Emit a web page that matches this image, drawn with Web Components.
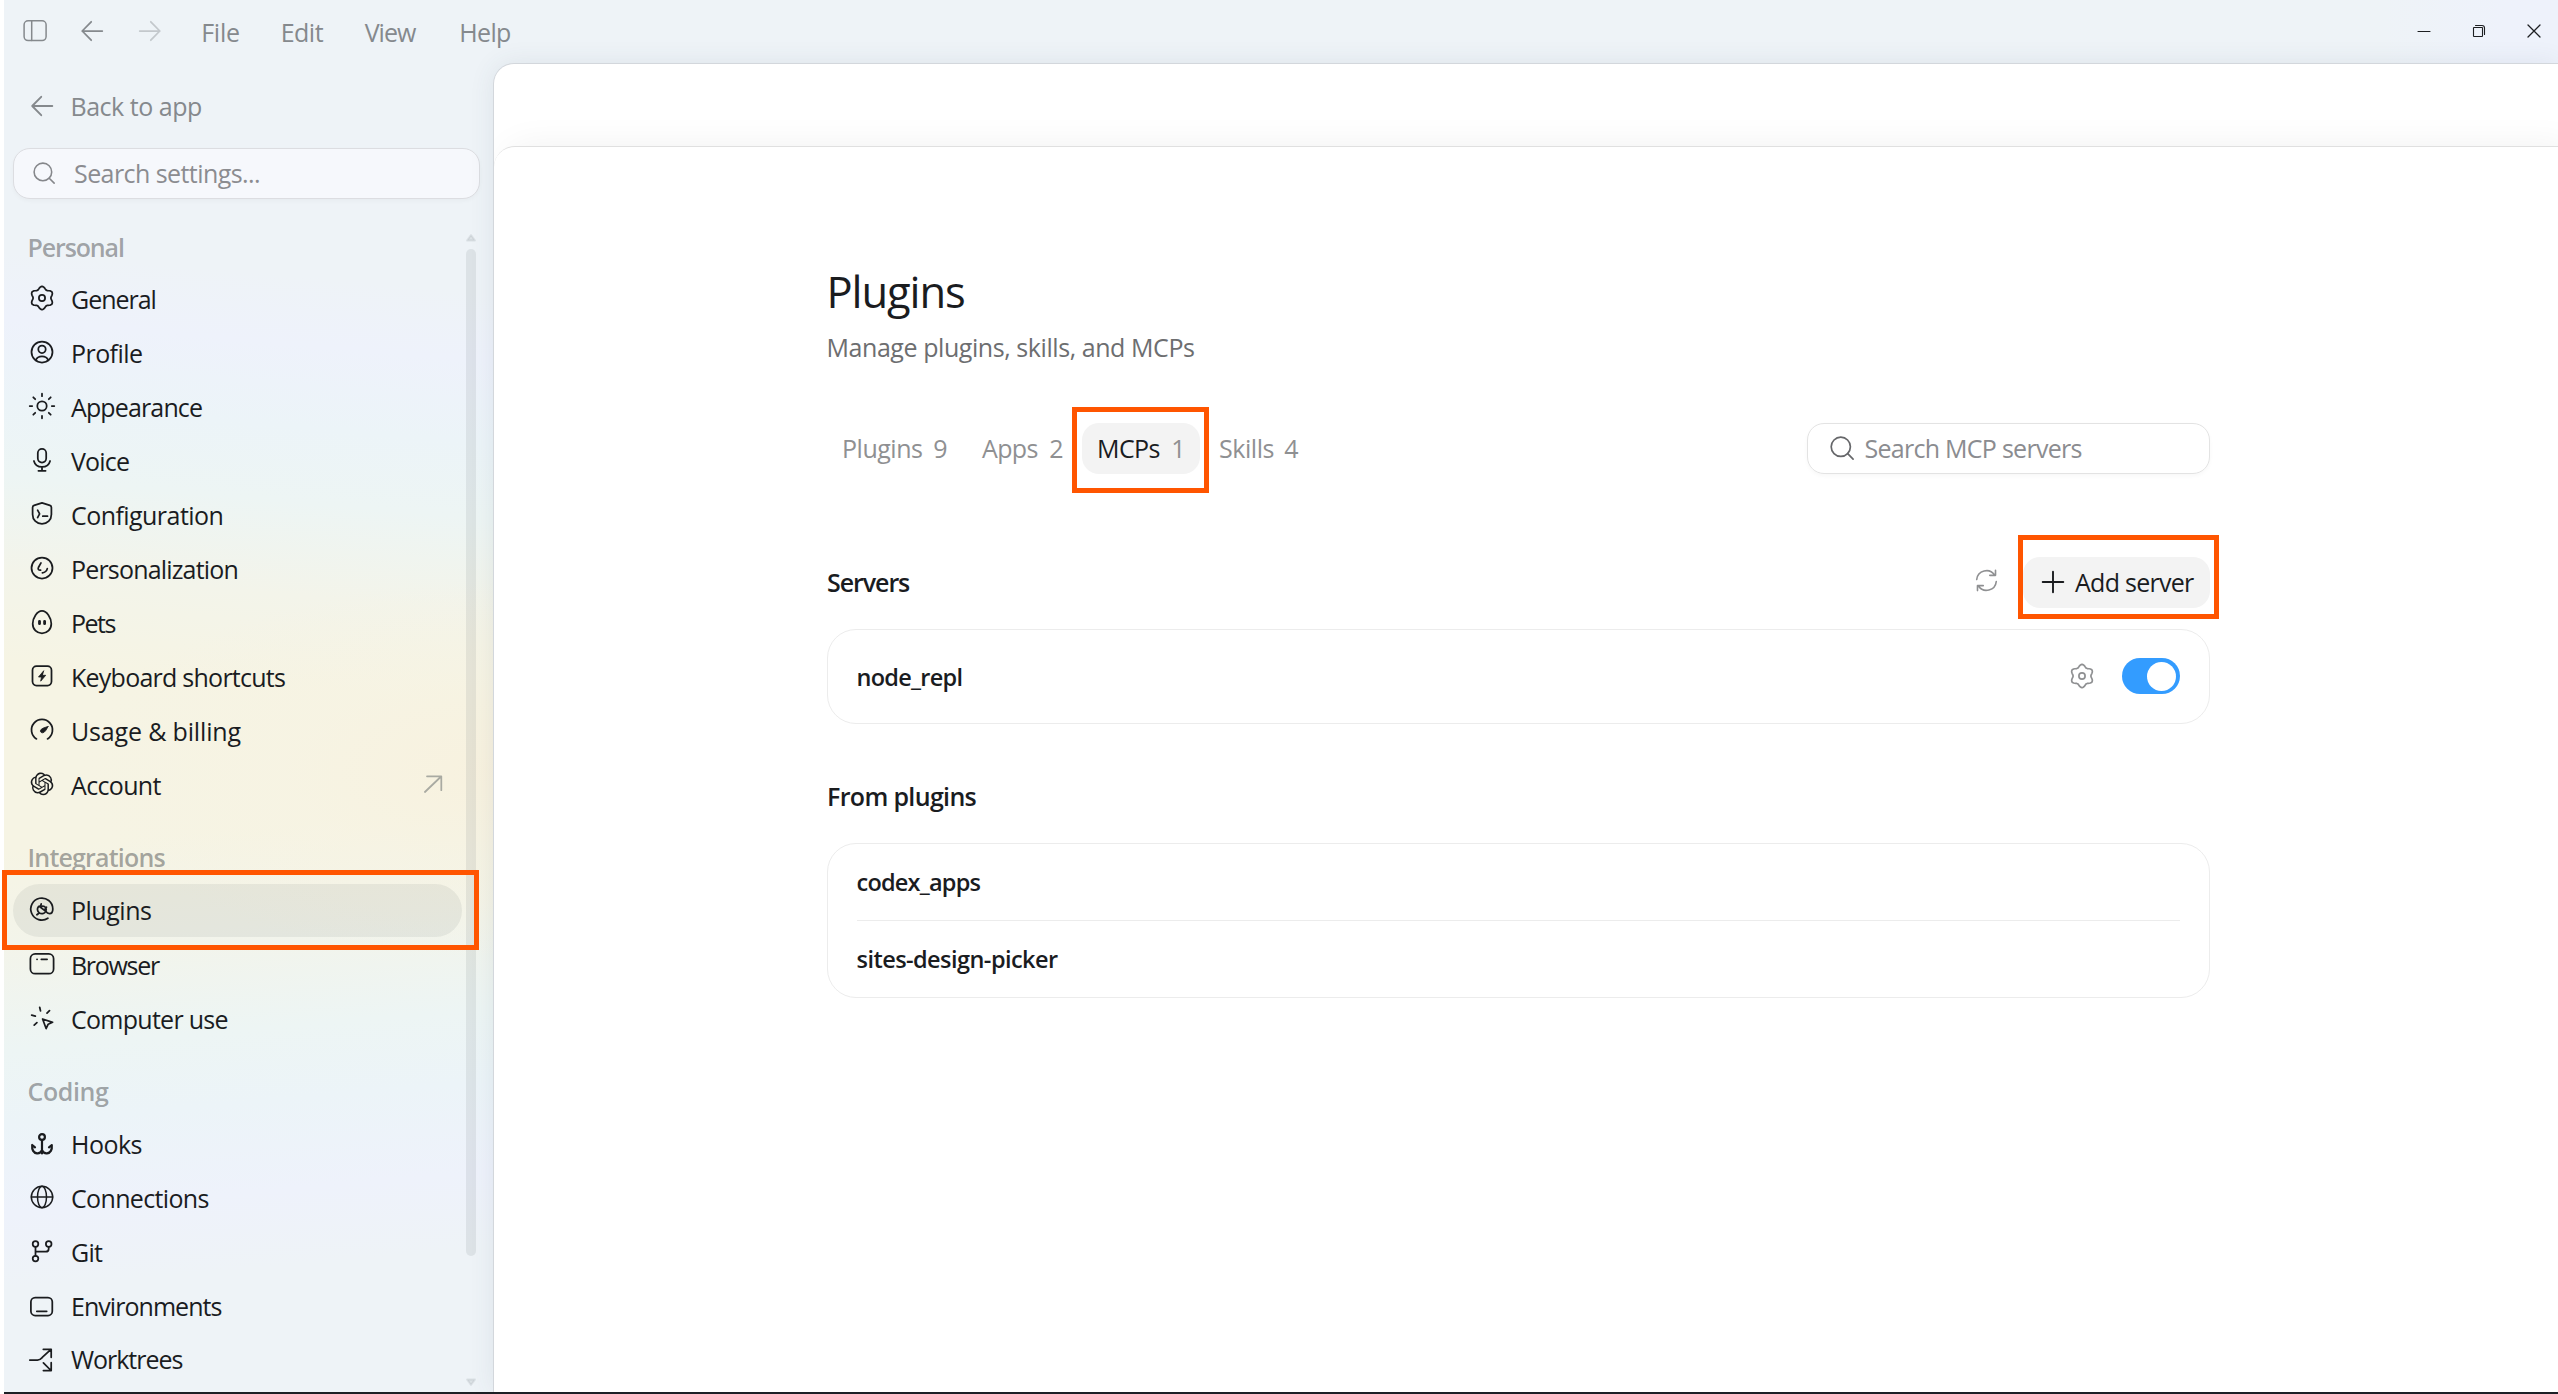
<!DOCTYPE html>
<html lang="en">
<head>
<meta charset="utf-8">
<title>Settings – Plugins</title>
<style>
html,body{margin:0;height:100%;overflow:hidden;background:#fff}
body{font:400 25px/34px "Open Sans","Noto Sans",sans-serif;color:#1a1c1f}
</style>
</head>
<body>
<settings-app></settings-app>
<script>
// Six-lobed outline of the gear icon
const gear=(()=>{let d='';for(let i=0;i<72;i++){const a=i*Math.PI/36,r=10.25+1.35*Math.cos(6*(a-Math.PI/2));d+=(i?'L':'M')+(12+r*Math.cos(a)).toFixed(2)+' '+(12-r*Math.sin(a)).toFixed(2)}return `<path d="${d}Z"/><circle cx="12" cy="12" r="3.1"/>`})();
const ICONS={
gear,
profile:'<circle cx="12" cy="12" r="10.5"/><circle cx="12" cy="9.3" r="3.7"/><path d="M5.7 20.3c1-2.7 3.4-4 6.3-4s5.3 1.3 6.3 4"/>',
sun:'<circle cx="12" cy="12" r="4.7"/><path d="M12-.3v2.5M12 21.8v2.5M-.3 12h2.5M21.8 12h2.5M3.3 3.3l1.9 1.9M18.8 18.8l1.9 1.9M3.3 20.7l1.9-1.9M18.8 5.2l1.9-1.9"/>',
mic:'<rect x="7.8" y=".9" width="8.4" height="13.6" rx="4.2"/><path d="M3.9 13c.9 3.600 4.200 5.900 8.100 5.900s7.200-2.300 8.100-5.900M12 18.900v3.900M8.400 22.800h7.200"/>',
shield:'<path d="M12 .9l7.900 2.500q1.500.5 1.500 2.100v7c0 5.300-4 9.400-9.400 9.400s-9.400-4.100-9.400-9.400v-7q0-1.600 1.500-2.100z"/><path d="M7.600 8.200l2 3.700-2 3.700M12.800 14.200h4.700"/>',
person:'<circle cx="12" cy="12" r="10.500"/><path d="M11 6.900l-2.600 4.600q-.6 1.300.2 2.100 .8.700 2 .5M17.300 12.600c-.6 2.300-2.300 3.900-4.900 4.300"/>',
egg:'<path d="M12 .9c5 0 9.300 7.100 9.300 12.800 0 5.700-4.200 9.600-9.300 9.600s-9.300-3.900-9.300-9.600c0-5.700 4.300-12.800 9.300-12.800z"/><path d="M9.500 11.300v2.400M14.600 11.300v2.400" stroke-width="2.800"/>',
bolt:'<rect x="2.500" y="2.200" width="19" height="19.300" rx="4"/><path d="M13.500 7l-5 6h3l-.8 4.200 5-5.900h-3z" fill="currentColor" stroke-width=".8"/>',
gauge:'<path d="M6.500 20.900a10.500 10.500 0 1 1 11 0"/><path d="M18 8.600c-1.500 3-3.200 6-5.200 6.200-1.300.1-2.400-.6-2.400-1.800 0-2.200 4.500-3.700 7.600-4.400z" fill="currentColor" stroke-width=".8"/>',
openai:'<path transform="translate(.65 .5) scale(.946)" fill="currentColor" stroke="none" d="M22.2819 9.8211a5.9847 5.9847 0 0 0-.5157-4.9108 6.0462 6.0462 0 0 0-6.5098-2.9A6.0651 6.0651 0 0 0 4.9807 4.1818a5.9847 5.9847 0 0 0-3.9977 2.9 6.0462 6.0462 0 0 0 .7427 7.0966 5.98 5.98 0 0 0 .511 4.9107 6.051 6.051 0 0 0 6.5146 2.9001A5.9847 5.9847 0 0 0 13.2599 24a6.0557 6.0557 0 0 0 5.7718-4.2058 5.9894 5.9894 0 0 0 3.9977-2.9001 6.0557 6.0557 0 0 0-.7475-7.0729zm-9.022 12.6081a4.4755 4.4755 0 0 1-2.8764-1.0408l.1419-.0804 4.7783-2.7582a.7948.7948 0 0 0 .3927-.6813v-6.7369l2.02 1.1686a.071.071 0 0 1 .038.052v5.5826a4.504 4.504 0 0 1-4.4945 4.4944zm-9.6607-4.1254a4.4708 4.4708 0 0 1-.5346-3.0137l.142.0852 4.783 2.7582a.7712.7712 0 0 0 .7806 0l5.8428-3.3685v2.3324a.0804.0804 0 0 1-.0332.0615L9.74 19.9502a4.4992 4.4992 0 0 1-6.1408-1.6464zM2.3408 7.8956a4.485 4.485 0 0 1 2.3655-1.9728V11.6a.7664.7664 0 0 0 .3879.6765l5.8144 3.3543-2.0201 1.1685a.0757.0757 0 0 1-.071 0l-4.8303-2.7865A4.504 4.504 0 0 1 2.3408 7.872zm16.5963 3.8558L13.1038 8.364 15.1192 7.2a.0757.0757 0 0 1 .071 0l4.8303 2.7913a4.4944 4.4944 0 0 1-.6765 8.1042v-5.6772a.79.79 0 0 0-.407-.667zm2.0107-3.0231l-.142-.0852-4.7735-2.7818a.7759.7759 0 0 0-.7854 0L9.409 9.2297V6.8974a.0662.0662 0 0 1 .0284-.0615l4.8303-2.7866a4.4992 4.4992 0 0 1 6.6802 4.66zM8.3065 12.863l-2.02-1.1638a.0804.0804 0 0 1-.038-.0567V6.0742a4.4992 4.4992 0 0 1 7.3757-3.4537l-.142.0805L8.704 5.459a.7948.7948 0 0 0-.3927.6813zm1.0976-2.3654l2.602-1.4998 2.6069 1.4998v2.9994l-2.5974 1.4997-2.6067-1.4997Z"/>',
at:'<path d="M17.900 21.200a11 11 0 1 1 4.900-9.200c0 3.200-1.300 4.700-3.300 4.700-1.700 0-2.700-.8-3.600-2.100"/><path d="M9.200 9.300l6.600 5.100c-1.400 2.400-4.400 3-6.500 1.500s-2.500-4.300-.8-6.300M10.300 10l.9-3.100M14.300 13l2.200-2.700M10.300 9.900c2-1.200 4.200-.8 5.300.7s1 2.700.3 3.800M8.600 16.500l-1.700 1.300"/>',
browser:'<rect x=".4" y="1.900" width="23.200" height="19.800" rx="4.800"/><path d="M7 7.300h.1M11.300 7.300h5.800"/>',
cursor:'<path d="M12.600 13l10 3.300-4.400 1.900-2.100 4.300zM9.700 1.300l.8 3.600M19.500 4.600l-2.500 2.500M1.700 9.100l3.600 1.100M4.200 19.100l2.700-2.500"/>',
anchor:'<g stroke-width="2.200"><circle cx="12" cy="5" r="2.900"/><path d="M12 8v13.500M5 15.300L2.200 13c-.5 4.800 1.400 8 4.800 8.300 2.400.2 4.100-1 5-3 .9 2 2.600 3.200 5 3 3.400-.3 5.300-3.500 4.800-8.300L19 15.300"/></g>',
globe:'<g stroke-width="1.500"><circle cx="12" cy="12" r="10.700"/><ellipse cx="12" cy="12" rx="4.500" ry="10.700"/><path d="M1.300 12h21.400"/></g>',
git:'<circle cx="5.500" cy="5" r="2.800"/><circle cx="18.700" cy="5" r="2.800"/><circle cx="5.500" cy="19.600" r="2.800"/><path d="M5.500 7.800v9M5.500 12.700h10.200q3 0 3-3v-1.900"/>',
env:'<rect x=".9" y="4.500" width="21.400" height="18" rx="4.300"/><path d="M6.800 18.300h9.900"/>',
tree:'<path d="M-.2 13h7.700c2.600 0 3.500-1.200 5-2.800l8.500-7.900M13.300 2.300h7.900v8M13.400 15.900l7.600 7.600M13.400 23.600h7.800v-7.900"/>',
panel:'<rect x="1.100" y="1.800" width="22" height="19.800" rx="4"/><path d="M8.700 1.800v19.800"/>',
back:'<path d="M11.200 2.800L2.200 12l9 9.200M2.200 12h20.100"/>',
fwd:'<path d="M12.800 2.800l9 9.200-9 9.200M21.800 12H1.700"/>',
search:'<circle cx="10.800" cy="10.800" r="9.600"/><path d="M17.700 17.700l5.400 5.400"/>',
out:'<path d="M3.900 20L20.100 4.500M6 4.300h14.300v13.900"/>',
plus:'<path d="M12 1.700v20.600M1.700 12h20.600"/>',
sync:'<path d="M1.800 11A10.200 10.200 0 0 1 20.400 6.300M21.400 1.500v5.100h-6M22.200 13a10.200 10.200 0 0 1-18.600 4.700M2.600 22.500v-5.100h6"/>',
min:'<path d="M6 12.500h12"/>',
restore:'<rect x="6.500" y="8.500" width="9" height="9" rx=".5"/><path d="M8.500 6.500h6.500q2.500 0 2.500 2.500v6.500"/>',
close:'<path d="M6 6l12 12M18 6L6 18"/>'
};
const def=(name,html,after)=>customElements.define(name,class extends HTMLElement{
  constructor(){super();this.attachShadow({mode:'open'})}
  connectedCallback(){this.shadowRoot.innerHTML=typeof html==='function'?html(this):html;if(after)after(this)}
});
const A=(e,n,d='')=>e.getAttribute(n)??d;

def('ui-icon',e=>`<style>:host{display:block;flex:none;line-height:0}svg{display:block;overflow:visible;fill:none;stroke:currentColor;stroke-linecap:round;stroke-linejoin:round}</style>
<svg viewBox="0 0 24 24" width="${A(e,'size','24')}" height="${A(e,'size','24')}" stroke-width="${A(e,'stroke','1.75')}">${ICONS[A(e,'name')]}</svg>`);

// Text run whose tracking is tuned so the inked width equals the "ink" attribute
const pen=document.createElement('canvas').getContext('2d');
def('ui-text','<style>:host{display:block;white-space:nowrap;flex:none}</style><slot></slot>',e=>{
  const t=e.textContent,w=+A(e,'ink',0);if(!w||t.length<2)return;
  const c=getComputedStyle(e);pen.font=`${c.fontWeight} ${c.fontSize} ${c.fontFamily}`;
  const m=pen.measureText(t);
  e.style.letterSpacing=((w-m.actualBoundingBoxLeft-m.actualBoundingBoxRight)/(t.length-1)).toFixed(3)+'px';
});

def('title-bar',`<style>
:host{display:flex;align-items:center;height:63px;color:#85898d;padding-left:19px}
.ic{display:flex;align-items:center;height:62px;gap:34px;padding-bottom:1px}
.ic ui-icon+ui-icon{margin-left:-.7px}
.menu{display:flex;padding-left:39.500px}
.menu ui-text{width:var(--w)}
.fwd{color:#c3c8cc}
.win{display:flex;gap:31px;margin-left:auto;color:#1d1f22;padding:0 12px 1px 0}
</style>
<div class="ic"><ui-icon name="panel" stroke="1.500"></ui-icon><ui-icon name="back"></ui-icon><ui-icon class="fwd" name="fwd"></ui-icon></div>
<nav class="menu"><ui-text ink="36" style="--w:79.500px">File</ui-text><ui-text ink="41" style="--w:84px">Edit</ui-text><ui-text ink="52.500" style="--w:94.500px">View</ui-text><ui-text ink="49">Help</ui-text></nav>
<div class="win"><ui-icon name="min" stroke="1.100"></ui-icon><ui-icon name="restore" stroke="1.100"></ui-icon><ui-icon name="close" stroke="1.300"></ui-icon></div>`);

def('search-field',e=>`<style>
:host{display:flex;align-items:center;box-sizing:border-box;border:1px solid #dcdde1;border-radius:17px;color:#8b8c90;box-shadow:0 2px 4px rgba(0,0,0,.03)}
ui-icon{color:var(--icon,#85878b);padding-bottom:1px}
ui-text{padding-bottom:2px}
</style><ui-icon name="search" size="${A(e,'size','22')}" stroke="1.700"></ui-icon><ui-text ink="${A(e,'ink')}">${A(e,'placeholder')}</ui-text>`);

def('nav-item',e=>`<style>
:host{display:flex;align-items:center;height:var(--row,54px);margin-left:9px;width:449px;box-sizing:border-box;padding-left:17.300px;border-radius:27px}
:host([active]){background:rgba(30,50,50,.065)}
ui-icon{padding-bottom:2.500px}
ui-text{margin-left:16.700px;padding-bottom:1px}
.out{margin-left:auto;margin-right:17.500px;color:#a9aaa2;padding-bottom:3px}
</style><ui-icon name="${A(e,'icon')}"></ui-icon><ui-text ink="${A(e,'ink')}">${A(e,'label')}</ui-text>${e.hasAttribute('external')?'<ui-icon class="out" name="out"></ui-icon>':''}`);

def('nav-group',e=>`<style>
:host{display:block}
ui-text{font-weight:600;color:rgba(60,62,66,.45);padding:var(--top,18.500px) 0 0 23.500px;line-height:var(--label,53.500px)}
</style><ui-text ink="${A(e,'ink')}">${A(e,'label')}</ui-text><slot></slot>`);

def('scroll-rail',`<style>
:host{display:flex;flex-direction:column;align-items:center;width:12px;color:rgba(80,95,100,.11)}
i{width:10px;height:1007px;border-radius:5px;background:currentColor;margin:7px 0 122px}
svg{display:block;fill:currentColor;stroke:currentColor;stroke-width:2;stroke-linejoin:round}
</style><svg width="12" height="9"><path d="M6 2l4 5.500H2z"/></svg><i></i><svg width="12" height="9"><path d="M2 1.500h8L6 7z"/></svg>`);

def('side-bar',`<style>
:host{display:flex;flex-direction:column}
.back{display:flex;align-items:center;height:34px;margin-top:26px;padding-left:26px;color:#85898d}
.back ui-text{margin-left:16.500px}
search-field{width:467px;height:51px;margin:25px 0 0 9px;background:#f6f8fc;padding-left:18.500px;gap:19.500px}
.scroll{display:flex;justify-content:space-between;margin-top:23px;padding-right:16px}
.scroll scroll-rail{margin-top:11px}
</style>
<div class="back"><ui-icon name="back" stroke="1.900"></ui-icon><ui-text ink="128.500">Back to app</ui-text></div>
<search-field placeholder="Search settings..." ink="184"></search-field>
<div class="scroll"><nav>
<nav-group label="Personal" ink="93.500" style="--top:0;--label:50px">
<nav-item icon="gear" label="General" ink="83.500"></nav-item>
<nav-item icon="profile" label="Profile" ink="69"></nav-item>
<nav-item icon="sun" label="Appearance" ink="131"></nav-item>
<nav-item icon="mic" label="Voice" ink="58"></nav-item>
<nav-item icon="shield" label="Configuration" ink="150.500"></nav-item>
<nav-item icon="person" label="Personalization" ink="164.500"></nav-item>
<nav-item icon="egg" label="Pets" ink="42.500"></nav-item>
<nav-item icon="bolt" label="Keyboard shortcuts" ink="212"></nav-item>
<nav-item icon="gauge" label="Usage &amp;amp; billing" ink="168.500"></nav-item>
<nav-item icon="openai" label="Account" ink="90.500" external></nav-item>
</nav-group>
<nav-group label="Integrations" ink="136">
<nav-item icon="at" label="Plugins" ink="78" active style="height:53px;margin-bottom:1px"></nav-item>
<nav-item icon="browser" label="Browser" ink="87"></nav-item>
<nav-item icon="cursor" label="Computer use" ink="155.500"></nav-item>
</nav-group>
<nav-group label="Coding" ink="80.500" style="--row:53.750px">
<nav-item icon="anchor" label="Hooks" ink="68.500"></nav-item>
<nav-item icon="globe" label="Connections" ink="136.500"></nav-item>
<nav-item icon="git" label="Git" ink="31"></nav-item>
<nav-item icon="env" label="Environments" ink="148.500"></nav-item>
<nav-item icon="tree" label="Worktrees" ink="111.500"></nav-item>
</nav-group></nav><scroll-rail></scroll-rail></div>`);

def('tab-item',e=>`<style>
:host{display:flex;justify-content:space-between;align-items:center;height:51px;box-sizing:border-box;padding:0 16px 0 15.500px;border-radius:17px;color:#8f9092}
:host([active]){background:#f3f3f3}
:host([active]) .l{color:#1a1c1f}
ui-text{padding-bottom:2px}
</style><ui-text class="l" ink="${A(e,'ink')}">${A(e,'label')}</ui-text><ui-text>${A(e,'count')}</ui-text>`);

def('toggle-switch',`<style>
:host{display:flex;justify-content:flex-end;align-items:center;width:58px;height:36px;border-radius:18px;background:#339cff;box-sizing:border-box;padding-right:4px}
i{width:29px;height:29px;border-radius:50%;background:#fff}
</style><i></i>`);

def('server-card',`<style>
:host{display:block;box-sizing:border-box;border:1px solid #ececec;border-radius:29px;padding:0 29px}
</style><slot></slot>`);

def('server-row',e=>`<style>
:host{display:flex;align-items:center;height:76px;font-size:23.500px;font-weight:600}
:host(.line){border-bottom:1px solid #ececec}
.r{margin-left:auto;display:flex;align-items:center;padding-bottom:1px}
</style><ui-text ink="${A(e,'ink')}">${A(e,'label')}</ui-text><div class="r"><slot></slot></div>`);

def('main-view',`<style>
:host{display:flex;flex-direction:column;box-sizing:border-box;border:solid #d3d7dc;border-width:1px 0 0 1px;border-radius:21px 0 0 0;background:#fff;overflow:hidden;box-shadow:0 0 26px rgba(60,75,100,.09)}
header{height:82px;flex:none}
.page{flex:1;border-top:1px solid #e0e0e0;border-radius:21px 0 0 0;box-shadow:12px 0 36px rgba(0,0,0,.06);padding-right:16px;display:flex;justify-content:center}
.col{width:1383px}
h1{margin:115px 0 0;font-weight:400;font-size:43.500px;line-height:60px}
.sub{color:#6d6e70;margin-top:8px}
.bar{display:flex;align-items:center;margin-top:59px}
tab-item{margin-right:2px}
search-field{margin-left:auto;width:403px;height:51px;padding-left:22px;gap:11px;border-color:#e3e3e3;--icon:#66676a}
.head{display:flex;align-items:center;height:51px}
.head ui-text{font-weight:600;padding-bottom:2px}
.head>ui-text{padding-left:.6px}
.btn{margin-left:25px;display:flex;align-items:center;box-sizing:border-box;width:187px;height:51px;border-radius:17px;background:#f3f3f3;padding-left:18.500px;gap:10px}
.head .btn ui-text{font-weight:400}
.btn ui-icon{padding-bottom:2px}
.sync{margin-left:auto;color:#8f9092;padding-bottom:4px}
.g{color:#8f9092;margin-right:27.500px;padding-bottom:1px}
</style>
<header></header>
<section class="page"><div class="col">
<h1><ui-text ink="133.500">Plugins</ui-text></h1>
<ui-text class="sub" ink="365.500">Manage plugins, skills, and MCPs</ui-text>
<div class="bar">
<tab-item label="Plugins" count="9" ink="78" style="width:137px"></tab-item>
<tab-item label="Apps" count="2" ink="55.500" style="width:114px;padding-left:16.500px"></tab-item>
<tab-item label="MCPs" count="1" ink="60.500" active style="width:118px;padding-right:14px"></tab-item>
<tab-item label="Skills" count="4" ink="53.500" style="width:112px;padding:0 15px 0 17.500px"></tab-item>
<search-field size="24" placeholder="Search MCP servers" ink="216"></search-field></div>
<div class="head" style="margin-top:83px"><ui-text ink="82">Servers</ui-text><ui-icon class="sync" name="sync" stroke="1.700" size="23"></ui-icon><div class="btn"><ui-icon name="plus" stroke="1.900"></ui-icon><ui-text ink="119">Add server</ui-text></div></div>
<server-card style="margin-top:21px"><server-row label="node_repl" ink="104" style="height:93px"><ui-icon class="g" name="gear" stroke="1.700"></ui-icon><toggle-switch></toggle-switch></server-row></server-card>
<div class="head" style="margin-top:47px"><ui-text ink="147.500">From plugins</ui-text></div>
<server-card style="margin-top:21px"><server-row class="line" label="codex_apps" ink="123"></server-row><server-row label="sites-design-picker" ink="200.500"></server-row></server-card>
</div></section>`);

// Orange frame that calls out one region
def('call-out',`<style>:host{position:absolute;box-sizing:border-box;border:5px solid #ff5500;z-index:5}</style>`);

// The sidebar tint is two mirrored ramps meeting at its warm middle
def('settings-app',`<style>
:host{display:flex;flex-direction:column;position:relative;height:100vh;margin-left:4px;box-sizing:border-box;border-bottom:2px solid #1c1f24;
background:
radial-gradient(ellipse 420px 190px at 489px 770px,rgba(248,241,222,.8),rgba(247,243,226,.5) 50%,rgba(246,244,228,0)) 0 0/489px 100% no-repeat,
linear-gradient(185deg,#eef3f7 292px,#eef2fb 360px,#ecf4f8 442px,#edf5f4 517px,#f3f4ea 610px,#f6f4e4 700px) 0 0/489px 768px no-repeat,
linear-gradient(355deg,#eef3f7 146px,#eef2fb 222px,#ecf4f8 312px,#edf5f4 385px,#f3f4ea 490px,#f6f4e4 585px) 0 768px/489px 626px no-repeat,
linear-gradient(90deg,#eef3f7 2380px,#eef2fb 2500px)}
.body{flex:1;display:flex;min-height:0}
side-bar{width:489px;flex:none;overflow:hidden}
main-view{flex:1}
</style>
<title-bar></title-bar><div class="body"><side-bar></side-bar><main-view></main-view></div>
<call-out style="left:-2px;top:870px;width:477px;height:80px"></call-out>
<call-out style="left:1068px;top:407px;width:137px;height:86px"></call-out>
<call-out style="left:2014px;top:535px;width:201px;height:84px"></call-out>`);
</script>
</body>
</html>
